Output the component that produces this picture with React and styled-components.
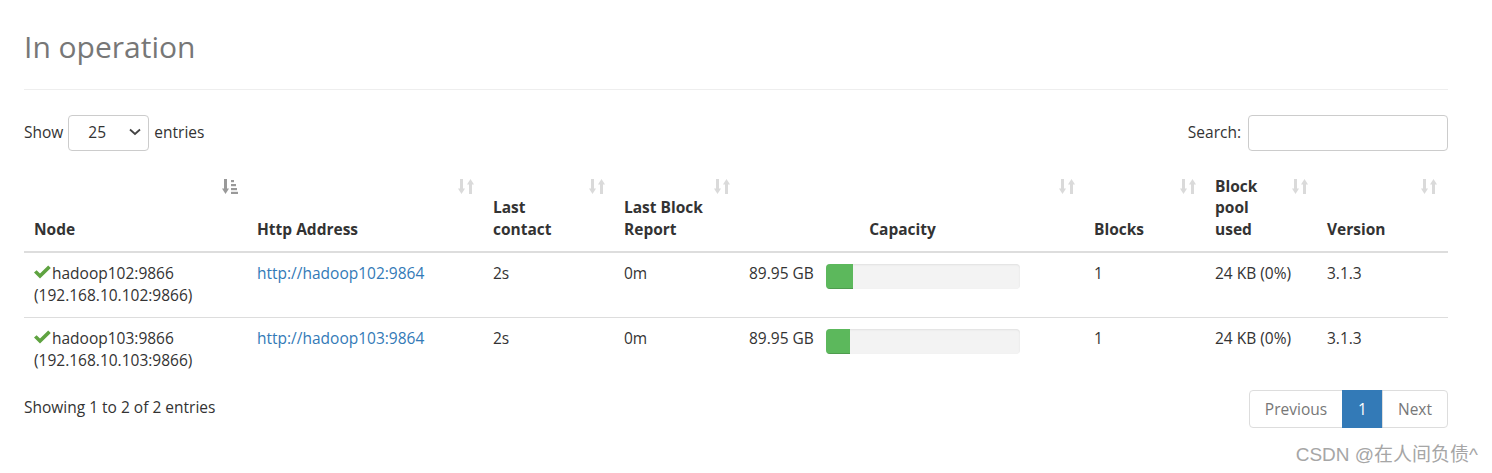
import styled, { createGlobalStyle } from "styled-components";

const GlobalStyle = createGlobalStyle`
  html, body {
    margin: 0;
    padding: 0;
    background: #fff;
  }
  body {
    font-family: "Open Sans", "Noto Sans", Arial, sans-serif;
    font-size: 15.5px;
    line-height: 21.4px;
    color: #333;
  }
`;

const nodes = [
  { name: "hadoop102:9866", ip: "192.168.10.102:9866", http: "http://hadoop102:9864", used: 27 },
  { name: "hadoop103:9866", ip: "192.168.10.103:9866", http: "http://hadoop103:9864", used: 24 },
];

const columns = [
  { label: ["Node"], width: 225, sorted: true },
  { label: ["Http Address"], width: 236 },
  { label: ["Last", "contact"], width: 131 },
  { label: ["Last Block", "Report"], width: 125 },
  { label: ["Capacity"], width: 345, center: true },
  { label: ["Blocks"], width: 121 },
  { label: ["Block", "pool", "used"], width: 112 },
  { label: ["Version"], width: 129 },
];

const SortIcon = ({ active }) =>
  active ? (
    <svg width="16" height="15" viewBox="0 0 16 15">
      <g fill="#999">
        <rect x="2" y="0" width="3" height="10" />
        <polygon points="0,9.5 7,9.5 3.5,15" />
        <rect x="9" y="1" width="3" height="2.2" />
        <rect x="9" y="5" width="5" height="2.2" />
        <rect x="9" y="9" width="6" height="2.2" />
        <rect x="9" y="12.8" width="7" height="2.2" />
      </g>
    </svg>
  ) : (
    <svg width="16" height="15" viewBox="0 0 16 15">
      <g fill="#dadada">
        <rect x="2" y="0" width="3" height="10" />
        <polygon points="0,9.5 7,9.5 3.5,15" />
        <polygon points="9,5.5 16,5.5 12.5,0" />
        <rect x="11" y="5" width="3" height="10" />
      </g>
    </svg>
  );

const CheckIcon = () => (
  <svg width="17" height="14" viewBox="0 0 17 14">
    <polygon fill="#5fa341" points="0,7.6 2.6,5.2 6,8.4 14.2,0.4 16.8,3 6,13.6" />
  </svg>
);

const Chevron = () => (
  <svg width="12" height="8" viewBox="0 0 12 8">
    <polyline points="1,1.5 6,6 11,1.5" fill="none" stroke="#444" strokeWidth="1.8" />
  </svg>
);

export default function App() {
  return (
    <>
      <GlobalStyle />
      <Page>
        <PageHeader>
          <Title>In operation</Title>
        </PageHeader>

        <Controls>
          <Label>
            Show
            <SelectBox>
              <span>25</span>
              <Chevron />
            </SelectBox>
            entries
          </Label>
          <Label>
            Search:
            <SearchInput />
          </Label>
        </Controls>

        <Table>
          <colgroup>
            {columns.map((c, i) => (
              <col key={i} style={{ width: c.width }} />
            ))}
          </colgroup>
          <thead>
            <tr>
              {columns.map((c, i) => (
                <Th key={i} $center={c.center}>
                  {c.label.map((l, j) => (
                    <div key={j}>{l}</div>
                  ))}
                  <SortSlot>
                    <SortIcon active={c.sorted} />
                  </SortSlot>
                </Th>
              ))}
            </tr>
          </thead>
          <tbody>
            {nodes.map((n, i) => (
              <tr key={n.name}>
                <Td $first={i === 0}>
                  <NodeName>
                    <CheckIcon />
                    {n.name}
                  </NodeName>
                  <div>({n.ip})</div>
                </Td>
                <Td $first={i === 0}>
                  <Link href="#">{n.http}</Link>
                </Td>
                <Td $first={i === 0}>2s</Td>
                <Td $first={i === 0}>0m</Td>
                <Td $first={i === 0}>
                  <CapacityCell>
                    <CapacityText>89.95 GB</CapacityText>
                    <Progress>
                      <ProgressFill style={{ width: n.used }} />
                    </Progress>
                  </CapacityCell>
                </Td>
                <Td $first={i === 0}>1</Td>
                <Td $first={i === 0}>24 KB (0%)</Td>
                <Td $first={i === 0}>3.1.3</Td>
              </tr>
            ))}
          </tbody>
        </Table>

        <Footer>
          <Info>Showing 1 to 2 of 2 entries</Info>
          <Pagination>
            <PageButton $disabled>Previous</PageButton>
            <PageButton $active>1</PageButton>
            <PageButton $disabled>Next</PageButton>
          </Pagination>
        </Footer>

        <Watermark>CSDN @在人间负债^</Watermark>
      </Page>
    </>
  );
}

const Page = styled.div`
  position: relative;
  width: 1424px;
  height: 473px;
  margin-left: 24px;
  padding-top: 30px;
  box-sizing: border-box;
`;

const PageHeader = styled.div`
  padding-bottom: 26px;
  border-bottom: 1px solid #eee;
`;

const Title = styled.h1`
  margin: 0;
  font-size: 30px;
  line-height: 33px;
  font-weight: 400;
  color: #777;
`;

const Controls = styled.div`
  display: flex;
  justify-content: space-between;
  align-items: center;
  margin-top: 25px;
  height: 36px;
`;

const Label = styled.label`
  display: flex;
  align-items: center;
  gap: 5px;
`;

const SelectBox = styled.div`
  box-sizing: border-box;
  width: 81px;
  height: 36px;
  border: 1px solid #ccc;
  border-radius: 4px;
  display: flex;
  align-items: center;
  justify-content: space-between;
  padding: 0 7px 2px 19px;
  span {
    margin-top: 2px;
  }
`;

const SearchInput = styled.div`
  box-sizing: border-box;
  width: 200px;
  height: 36px;
  border: 1px solid #ccc;
  border-radius: 4px;
  margin-left: 2px;
`;

const Table = styled.table`
  width: 1424px;
  table-layout: fixed;
  border-collapse: collapse;
  margin-top: 17px;
`;

const Th = styled.th`
  position: relative;
  vertical-align: bottom;
  text-align: ${(p) => (p.$center ? "center" : "left")};
  padding: 8px ${(p) => (p.$center ? "30px" : "8px")} 11px 8px;
  font-weight: 700;
  border-bottom: 2px solid #ddd;
  &:first-child {
    padding-left: 10px;
  }
`;

const SortSlot = styled.span`
  position: absolute;
  top: 11px;
  right: 11px;
  line-height: 0;
`;

const Td = styled.td`
  vertical-align: top;
  padding: 10px 8px 8px;
  border-top: ${(p) => (p.$first ? "none" : "1px solid #ddd")};
  &:first-child {
    padding-left: 10px;
  }
`;

const NodeName = styled.div`
  display: flex;
  align-items: center;
  gap: 1px;
  svg {
    margin-top: -4px;
  }
`;

const Link = styled.a`
  color: #337ab7;
  text-decoration: none;
`;

const CapacityCell = styled.div`
  display: flex;
  align-items: flex-start;
`;

const CapacityText = styled.div`
  width: 64px;
  text-align: right;
  margin-right: 13px;
  white-space: nowrap;
`;

const Progress = styled.div`
  width: 194px;
  height: 25px;
  margin: 1px 0 20px;
  background: #f3f3f3;
  border-radius: 4px;
  box-shadow: inset 0 1px 2px rgba(0, 0, 0, 0.08);
  overflow: hidden;
`;

const ProgressFill = styled.div`
  height: 100%;
  background: #5cb85c;
  box-shadow: inset 0 -1px 0 rgba(0, 0, 0, 0.15);
`;

const Footer = styled.div`
  display: flex;
  justify-content: space-between;
  align-items: flex-start;
  margin-top: 8px;
`;

const Info = styled.div`
  padding-top: 7px;
`;

const Pagination = styled.div`
  display: flex;
  height: 38px;
`;

const PageButton = styled.span`
  box-sizing: border-box;
  display: flex;
  align-items: center;
  height: 38px;
  padding: 0 15px;
  border: 1px solid ${(p) => (p.$active ? "#337ab7" : "#ddd")};
  margin-left: -1px;
  background: ${(p) => (p.$active ? "#337ab7" : "#fff")};
  color: ${(p) => (p.$active ? "#fff" : "#777")};
  &:first-child {
    margin-left: 0;
    border-radius: 4px 0 0 4px;
  }
  &:last-child {
    border-radius: 0 4px 4px 0;
  }
`;

const Watermark = styled.div`
  position: absolute;
  right: -30px;
  bottom: 8px;
  font-family: Arial, "Noto Sans CJK SC", sans-serif;
  font-size: 19px;
  color: #a6a6a6;
  white-space: nowrap;
`;
